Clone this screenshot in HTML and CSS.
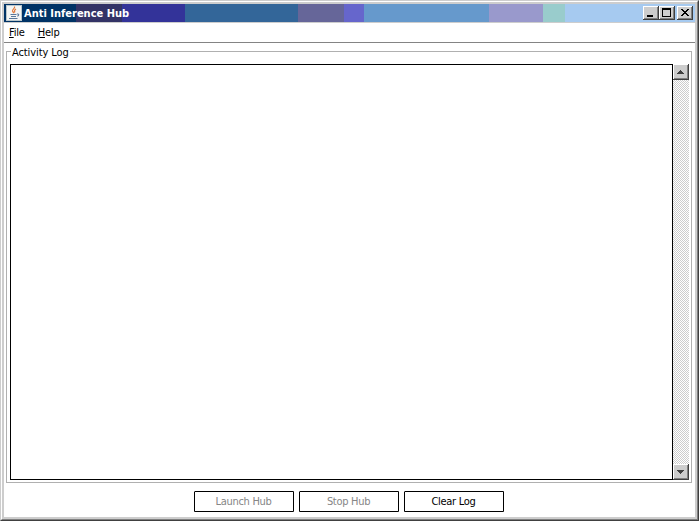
FILE: index.html
```
<!DOCTYPE html>
<html lang="en">
<head>
<meta charset="utf-8">
<title>Anti Inference Hub</title>
<link rel="stylesheet" href="styles.css">
</head>
<body>
<div class="window">
  <div class="frame">
    <header class="titlebar">
      <svg class="logo" width="16" height="16" viewBox="0 0 16 16">
        <path fill="#b9c6cc" d="M0 0h16v16H0z"/>
        <path fill="#f3f5f4" d="M1 1h14v14H1z"/>
        <path fill="none" stroke="#e07a3c" stroke-width="1.2" d="M8.500 1.500c1 2-2.500 2.500-2 4.500 .3 1 1.200 1.200 1.200 2.200M10 4c-2 1-1.800 2-1.200 3.500"/>
        <path fill="none" stroke="#59799b" stroke-width="1.1" d="M4.500 9.500h6M5 11.500h5M3 13.500h8.500M11 9c2.500-.5 2 2 .3 2.300"/>
      </svg>
      <h1 class="title">Anti Inference Hub</h1>
      <div class="controls">
        <span class="key"><svg width="16" height="14" shape-rendering="crispEdges"><path d="M4 9h6v2H4z"/></svg></span>
        <span class="key"><svg width="16" height="14" shape-rendering="crispEdges"><path fill-rule="evenodd" d="M3 2h9v9H3zM4 4v6h7V4z"/></svg></span>
        <span class="key close"><svg width="16" height="14" shape-rendering="crispEdges"><path d="M4 3h2v1h1v1h2V4h1V3h2v1h-1v1h-1v1H9v1h1v1h1v1h1v1h-2V9H9V8H7v1H6v1H4V9h1V8h1V7h1V6H6V5H5V4H4z"/></svg></span>
      </div>
    </header>
    <nav class="menu">
      <span class="item file"><u>F</u>ile</span>
      <span class="item help"><u>H</u>elp</span>
    </nav>
    <main class="content">
      <section class="group">
        <h2 class="legend"><span>Activity Log</span></h2>
        <div class="log">
          <div class="text"></div>
          <div class="scrollbar">
            <span class="arrow"><svg width="16" height="16" shape-rendering="crispEdges"><path d="M7 6h1v1h1v1h1v1h1v1H4V9h1V8h1V7h1z"/></svg></span>
            <span class="arrow"><svg width="16" height="16" shape-rendering="crispEdges"><path d="M4 6h7v1h-1v1H9v1H8v1H7V9H6V8H5V7H4z"/></svg></span>
          </div>
        </div>
      </section>
      <footer class="actions">
        <button class="btn launch" disabled><span>Launch Hub</span></button>
        <button class="btn stop" disabled><span>Stop Hub</span></button>
        <button class="btn clear"><span>Clear Log</span></button>
      </footer>
    </main>
  </div>
</div>
</body>
</html>
```
FILE: styles.css
```
* { box-sizing: border-box; }
body {
  margin: 0;
  font: 11px/14px "DejaVu Sans Condensed", "DejaVu Sans", sans-serif;
  color: #000;
}
svg { display: block; }
.window {
  width: 699px;
  height: 521px;
  border: 1px solid;
  border-color: #cdcdcd #404040 #404040 #cdcdcd;
}
.frame {
  height: 519px;
  border: 1px solid;
  border-color: #fff #808080 #808080 #fff;
  box-shadow: inset 0 0 0 2px #cdcdcd;
  padding: 2px;
  display: flex;
  flex-direction: column;
}
.titlebar {
  display: flex;
  height: 18px;
  flex: none;
  padding: 1px 2px;
  background: linear-gradient(90deg,
    #003366 72px, #333366 72px 118px, #333399 118px 181px,
    #336699 181px 294px, #666699 294px 340px, #6666cc 340px 360px,
    #6699cc 360px 485px, #9999cc 485px 539px, #99cccc 539px 561px,
    #a6caf0 561px);
}
.title {
  margin: 2px 0 0 2px;
  font: bold 11px/14px "DejaVu Sans Condensed", "DejaVu Sans", sans-serif;
  color: #fff;
  white-space: nowrap;
}
.controls { display: flex; margin: 1px 0 0 auto; }
.key, .arrow {
  display: block;
  background: #cdcdcd;
  box-shadow: inset -1px -1px #404040, inset 1px 1px #fff, inset -2px -2px #808080;
}
.key { width: 16px; height: 14px; }
.close { margin-left: 2px; }
.menu {
  display: flex;
  flex: none;
  height: 21px;
  border-top: 1px solid #cdcdcd;
  border-bottom: 1px solid #848484;
  padding: 3px 5px;
  gap: 13px;
  letter-spacing: -0.2px;
}
.menu u { text-underline-offset: 1px; text-decoration-thickness: 1px; }
.content {
  flex: 1;
  min-height: 0;
  padding: 8px 3px 0 2px;
}
.group {
  height: 432px;
  border: 1px solid #b0b0b0;
  padding: 0 2px 2px 3px;
}
.legend {
  margin: -7px 0 0 1px;
  height: 19px;
  font: inherit;
  letter-spacing: -0.1px;
}
.legend span { display: inline-block; background: #fff; padding: 1px 1px 0; }
.log { display: flex; height: 416px; }
.text { flex: 1; border: 1px solid #000; }
.scrollbar {
  width: 16px;
  display: flex;
  flex-direction: column;
  justify-content: space-between;
  background: repeating-conic-gradient(#cdcdcd 0 25%, #fff 0 50%) 0 0 / 2px 2px;
}
.arrow { width: 16px; height: 16px; }
.arrow svg { fill: #404040; }
.actions {
  display: flex;
  justify-content: center;
  gap: 5px;
  padding: 8px 1px 0 0;
}
.btn {
  width: 100px;
  height: 21px;
  padding: 0;
  border: 1px solid #000;
  border-top-left-radius: 1px;
  background: #fff;
  color: #000;
  font: inherit;
  letter-spacing: -0.3px;
}
.btn:disabled { color: #868686; }
```
